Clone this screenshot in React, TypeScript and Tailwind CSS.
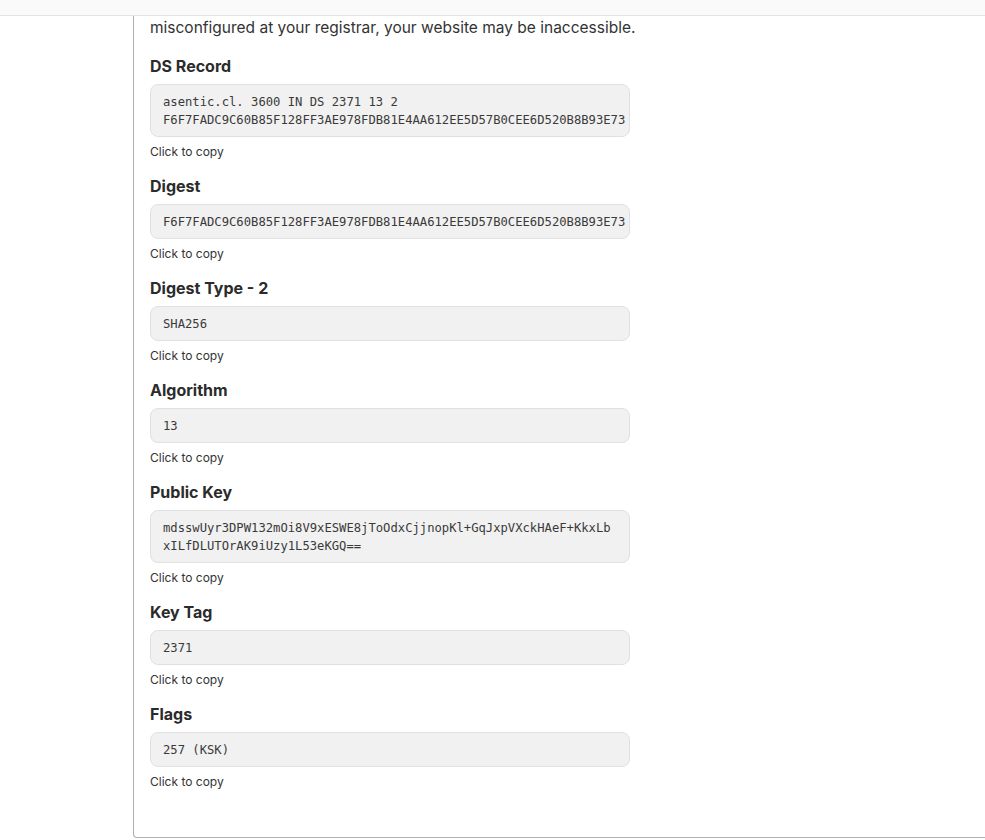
import React from "react";

interface Field {
  label: string;
  value: string;
  mode: "pre" | "wrap";
}

const fields: Field[] = [
  {
    label: "DS Record",
    value:
      "asentic.cl. 3600 IN DS 2371 13 2\nF6F7FADC9C60B85F128FF3AE978FDB81E4AA612EE5D57B0CEE6D520B8B93E73",
    mode: "pre",
  },
  {
    label: "Digest",
    value: "F6F7FADC9C60B85F128FF3AE978FDB81E4AA612EE5D57B0CEE6D520B8B93E73",
    mode: "pre",
  },
  { label: "Digest Type - 2", value: "SHA256", mode: "pre" },
  { label: "Algorithm", value: "13", mode: "pre" },
  {
    label: "Public Key",
    value:
      "mdsswUyr3DPW132mOi8V9xESWE8jToOdxCjjnopKl+GqJxpVXckHAeF+KkxLbxILfDLUTOrAK9iUzy1L53eKGQ==",
    mode: "wrap",
  },
  { label: "Key Tag", value: "2371", mode: "pre" },
  { label: "Flags", value: "257 (KSK)", mode: "pre" },
];

const CopyField = ({ field }: { field: Field }) => (
  <div className="mb-[14px]">
    <h3 className="text-[16px] leading-6 font-bold text-[#2b2b2b] mb-[6px]">{field.label}</h3>
    <div
      className={
        "w-[480px] bg-[#f1f1f1] border border-[#e0e0e0] rounded-lg pl-3 pr-0 py-[7.5px] font-['DejaVu_Sans_Mono',monospace] text-[12.2px] leading-[18px] text-[#3a3a3a] cursor-pointer " +
        (field.mode === "pre" ? "whitespace-pre overflow-hidden" : "break-all pr-3")
      }
    >
      {field.value}
    </div>
    <div className="mt-[7px] text-[12px] leading-4 text-[#333]">Click to copy</div>
  </div>
);

export default function App() {
  return (
    <div className="min-h-screen bg-white font-['Inter',sans-serif]">
      <div className="h-[16px] bg-[#fafafa] border-b border-[#e3e3e3]" />
      <div className="pl-[133px]">
        <div className="border-l border-b border-[#b0b0b0] rounded-bl-[4px] pl-4 pb-[33px]">
          <p className="text-[15.5px] leading-6 text-[#333] mb-[14px]">
            misconfigured at your registrar, your website may be inaccessible.
          </p>
          {fields.map((f) => (
            <CopyField key={f.label} field={f} />
          ))}
        </div>
      </div>
    </div>
  );
}
